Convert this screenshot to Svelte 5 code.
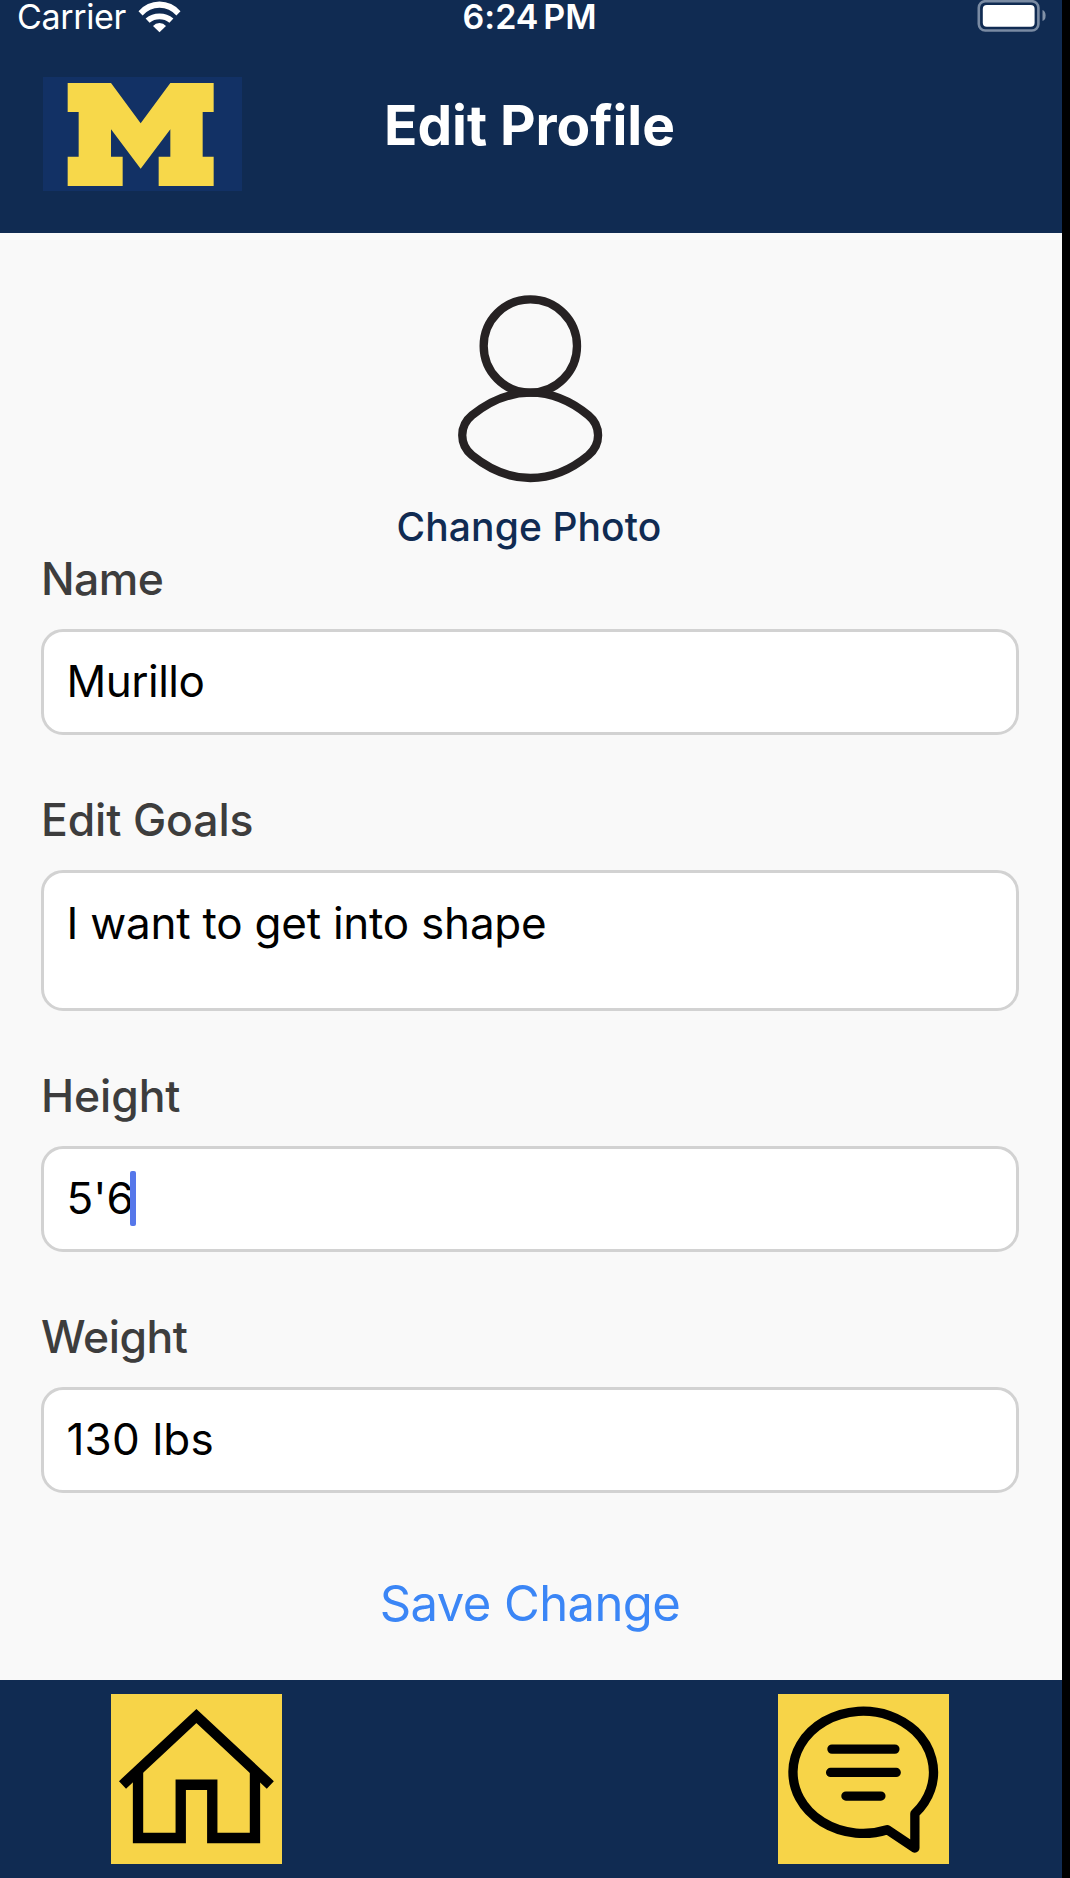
<script>
  const fields = [
    { label: 'Name', value: 'Murillo', key: 'name' },
    { label: 'Edit Goals', value: 'I want to get into shape', key: 'goals' },
    { label: 'Height', value: "5'6", key: 'height', focused: true },
    { label: 'Weight', value: '130 lbs', key: 'weight' }
  ];
</script>

<div class="screen">
  <header>
    <div class="status">
      <div class="carrier">
        <span>Carrier</span>
        <svg class="wifi" viewBox="0 0 43 33" aria-hidden="true">
          <path d="M.5 11.2A27.5 27.5 0 0 1 42.5 11.2L38.4 15.6A22 22 0 0 0 4.6 15.6Z" />
          <path d="M7.6 18.6A21.5 21.5 0 0 1 35.4 18.6L31.4 22.7A16 16 0 0 0 11.6 22.7Z" />
          <path d="M15 26A8.5 8.5 0 0 1 28 26L21.5 32.3Z" />
        </svg>
      </div>
      <span class="time">6:24 PM</span>
      <svg class="battery" viewBox="0 0 70 33" aria-hidden="true">
        <rect class="shell" x="1.8" y="1.2" width="59.6" height="29.3" rx="6.5" />
        <rect class="charge" x="5.8" y="5" width="51.8" height="21.7" rx="4" />
        <path class="nub" d="M65.5 10Q68.6 11 68.6 15.5T65.5 21Z" />
      </svg>
    </div>
    <div class="bar">
      <svg class="logo" viewBox="129 232 597 342" role="img" aria-label="Michigan">
        <rect class="logo-bg" x="129" y="232" width="597" height="342" />
        <path class="logo-mark" d="M203 250H333L422 371L511 250H641V337H608V471H641V559H476V471H511V389L422 507L333 389V471H368V559H203V471H236V337H203Z" />
      </svg>
      <h1>Edit Profile</h1>
    </div>
  </header>

  <main>
    <div class="photo">
      <svg class="avatar" viewBox="234 75 432 561" aria-hidden="true">
        <circle cx="451" cy="228" r="140" />
        <path d="M451 368C380 368 318 402 276 436C237 468 237 524 276 556C318 590 380 624 451 624C522 624 584 590 625 556C664 524 664 468 625 436C584 402 522 368 451 368Z" />
      </svg>
      <span class="change">Change Photo</span>
    </div>

    {#each fields as f}
      <section class="field {f.key}">
        <span class="label">{f.label}</span>
        <div class="box"><span class="value">{f.value}</span>{#if f.focused}<i class="caret"></i>{/if}</div>
      </section>
    {/each}

    <button class="save">Save Change</button>
  </main>

  <footer>
    <svg class="tab" viewBox="94 70 511 511" role="img" aria-label="Home">
      <path class="stroke31" d="M128.5 342.5L350 136L571.5 342.5" />
      <path class="stroke31" d="M175 300V501.500H303V342H397.500V501.500H525.500V300" />
    </svg>
    <svg class="tab" viewBox="84 70 512 511" role="img" aria-label="Messages">
      <path class="stroke28" d="M412 477A211 183.500 0 1 1 495 429V532Z" />
      <path class="stroke28" d="M246 235H435M242 305H439M288 376H393" />
    </svg>
  </footer>
</div>

<style>
  :global(body) { background: #000; }
  .screen {
    width: 1062px;
    height: 1878px;
    display: flex;
    flex-direction: column;
    overflow: hidden;
    background: #f9f9f9;
    font-family: Inter, "Liberation Sans", sans-serif;
  }
  header { height: 232.700px; flex: none; background: #102b52; color: #fff; }
  .status {
    display: grid;
    grid-template-columns: 1fr auto 1fr;
    height: 33px;
    line-height: 33px;
    font-size: 34px;
    padding: 0 15px 0 17px;
  }
  .carrier { display: flex; gap: 12px; letter-spacing: -0.350px; }
  .wifi { width: 43px; height: 33px; fill: #fff; }
  .time { font-weight: 600; letter-spacing: 0.050px; word-spacing: -4px; margin-right: 5px; }
  .battery { width: 70px; height: 33px; justify-self: end; }
  .shell { fill: none; stroke: #7a8ba3; stroke-width: 2.600px; }
  .charge { fill: #fff; }
  .nub { fill: #8292a8; }
  .bar { display: grid; grid-template-columns: 1fr auto 1fr; align-items: start; }
  .logo { width: 199px; height: 114px; margin: 44.300px 0 0 43px; }
  .logo-bg { fill: #123165; }
  .logo-mark { fill: #f7d84a; }
  h1 {
    margin: 59px 3px 0 0;
    font-size: 55px;
    line-height: 66px;
    font-weight: 700;
    letter-spacing: -0.060px;
  }

  main { flex: 1; display: flex; flex-direction: column; padding: 62.300px 43px 0 41px; }
  .photo { display: flex; flex-direction: column; align-items: center; margin-bottom: 2px; }
  .avatar {
    width: 144px;
    height: 187px;
    margin-bottom: 22px;
    fill: none;
    stroke: #262223;
    stroke-width: 25px;
    overflow: visible;
  }
  .change {
    margin-right: 2px;
    font-size: 39px;
    line-height: 46px;
    font-weight: 500;
    letter-spacing: 0.100px;
    color: #102b52;
  }

  .field { display: flex; flex-direction: column; margin-bottom: 58px; }
  .label {
    font-size: 44.500px;
    line-height: 54px;
    font-weight: 500;
    color: #3d3d3d;
    margin-bottom: 23px;
  }
  .box {
    box-sizing: border-box;
    height: 106px;
    display: flex;
    align-items: center;
    padding: 0 22px 1px 22.500px;
    border: 3px solid #d2d2d2;
    border-radius: 22px;
    background: #fff;
    font-size: 44px;
    line-height: 54px;
    color: #000;
  }
  .goals .box { height: 141px; align-items: flex-start; padding-top: 23px; }
  .name .label { letter-spacing: -0.600px; }
  .weight .label { letter-spacing: -0.450px; }
  .goals .label { letter-spacing: -0.120px; }
  .height .label { letter-spacing: -0.100px; }
  .name .value { letter-spacing: -0.500px; }
  .goals .value { letter-spacing: -0.240px; }
  .weight .value { letter-spacing: 0.200px; }
  .caret { width: 5.500px; height: 55px; margin-left: -3.500px; border-radius: 2px; background: #5677ea; }

  .save {
    align-self: center;
    margin-top: 23px;
    padding: 0;
    border: 0;
    background: none;
    font: 400 49px/60px Inter, "Liberation Sans", sans-serif;
    letter-spacing: -0.600px;
    color: #3b86f6;
  }

  footer {
    box-sizing: border-box;
    flex: none;
    height: 198.300px;
    display: flex;
    justify-content: space-between;
    padding: 13.900px 113.500px 0 111.200px;
    background: #102b52;
  }
  .tab { width: 170.500px; height: 170.500px; background: #f7d448; fill: none; stroke: #000; }
  .stroke31 { stroke-width: 31px; }
  .stroke28 { stroke-width: 28px; stroke-linecap: round; stroke-linejoin: round; }
</style>
